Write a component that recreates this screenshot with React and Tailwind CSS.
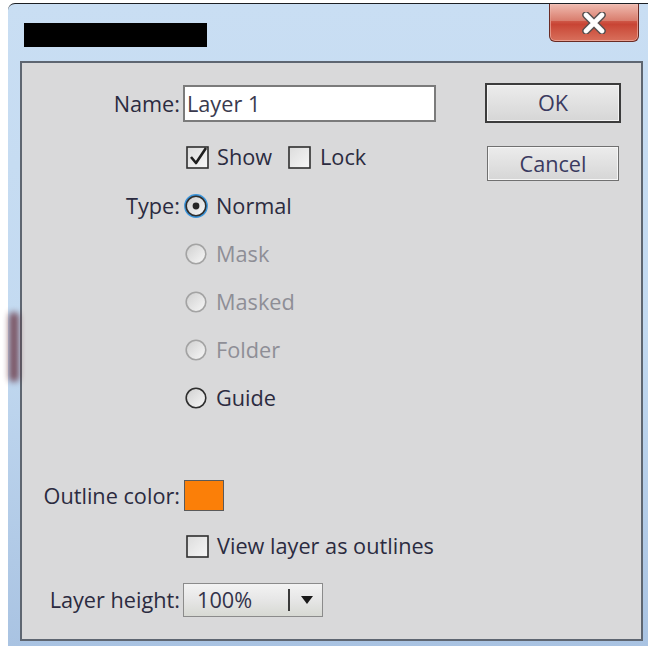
import React from 'react';

const font = { fontFamily: '"Open Sans", "Noto Sans", sans-serif' };

const CheckBox = ({ checked }) => (
  <svg width="24" height="24" viewBox="0 0 24 24" className="shrink-0">
    <defs>
      <linearGradient id="cbFill" x1="0" y1="0" x2="1" y2="1">
        <stop offset="0" stopColor="#dcdcdc" />
        <stop offset="1" stopColor="#f7f7f7" />
      </linearGradient>
    </defs>
    <rect x="1" y="2" width="21" height="21" fill="url(#cbFill)" stroke="#2f2f2f" strokeWidth="1.6" />
    {checked && (
      <path d="M5 12 L10 18 L20 3" fill="none" stroke="#1f1f1f" strokeWidth="2.6" strokeLinejoin="round" />
    )}
  </svg>
);

const Radio = ({ selected, disabled }) => (
  <svg width="24" height="24" viewBox="0 0 24 24" className="shrink-0">
    <defs>
      <linearGradient id="rdFill" x1="0" y1="0" x2="1" y2="1">
        <stop offset="0" stopColor="#cfcfcf" />
        <stop offset="1" stopColor="#f8f8f8" />
      </linearGradient>
    </defs>
    {selected && <circle cx="12" cy="12" r="11" fill="none" stroke="#3a95dc" strokeWidth="1.8" />}
    <circle
      cx="12"
      cy="12"
      r="9.8"
      fill="url(#rdFill)"
      stroke={disabled ? '#a3a3a3' : '#2e2e2e'}
      strokeWidth="1.6"
    />
    {selected && <circle cx="12" cy="12" r="3.4" fill="#262626" />}
  </svg>
);

const RadioRow = ({ label, selected, disabled, className = '' }) => (
  <div className={`flex h-[22px] items-center pl-[162px] ${className}`}>
    <Radio selected={selected} disabled={disabled} />
    <span className={`ml-[8px] ${disabled ? 'text-[#8e8e96]' : 'text-[#2b2b40]'}`}>{label}</span>
  </div>
);

export default function App() {
  return (
    <div className="h-[646px] w-[648px] overflow-hidden bg-white pl-[8px] pt-[3px]" style={font}>
      {/* window chrome */}
      <div className="relative h-[645px] w-[648px] rounded-tl-[7px] border-t border-[#1c1f24] bg-gradient-to-b from-[#c9def3] via-[#c3daf1] to-[#a9c3e2]">
        <div className="absolute left-[1px] top-[308px] h-[70px] w-[10px] rounded-full bg-[#5b1a26] opacity-70 blur-[3px]" />

        {/* title bar */}
        <div className="flex h-[57px] items-start">
          <div className="ml-[16px] mt-[19px] h-[24px] w-[183px] bg-black" />
          <button className="relative ml-auto mr-[17px] flex h-[38px] w-[90px] items-center justify-center overflow-hidden rounded-b-[6px] border border-t-0 border-[#6a2b24] bg-gradient-to-b from-[#e9a99d] from-0% via-[#c84434] via-55% to-[#d8705c] shadow-[inset_0_0_0_1px_rgba(255,220,210,0.45)]">
            <span className="absolute inset-x-0 top-0 h-[45%] bg-gradient-to-b from-[#f1c2b8] to-[#dc8b7c] opacity-70" />
            <svg width="24" height="22" viewBox="0 0 24 22" className="relative">
              <path d="M4 3 L20 19 M20 3 L4 19" stroke="#585050" strokeWidth="7.5" strokeLinecap="round" />
              <path d="M4 3 L20 19 M20 3 L4 19" stroke="#ffffff" strokeWidth="4.6" strokeLinecap="round" />
            </svg>
          </button>
        </div>

        {/* dialog body */}
        <div className="ml-[12px] flex h-[580px] w-[623px] border-2 border-[#5e6671] bg-[#d9d9da] text-[21.7px] leading-none text-[#2b2b40]">
          <div className="flex w-[463px] flex-col pt-[22px]">
            <div className="flex h-[37px] items-center">
              <span className="w-[158px] text-right">Name:</span>
              <div className="ml-[3px] flex h-[37px] w-[253px] items-center border-2 border-[#7b7b7b] bg-white pl-[2px] text-[#3a3a4e]">
                Layer 1
              </div>
            </div>

            <div className="mt-[24px] flex h-[22px] items-center pl-[164px]">
              <CheckBox checked />
              <span className="ml-[7px]">Show</span>
              <span className="ml-[16px]">
                <CheckBox />
              </span>
              <span className="ml-[8px]">Lock</span>
            </div>

            <div className="mt-[27px] flex h-[22px] items-center">
              <span className="w-[158px] text-right">Type:</span>
              <span className="ml-[4px]">
                <Radio selected />
              </span>
              <span className="ml-[8px]">Normal</span>
            </div>
            <RadioRow label="Mask" disabled className="mt-[26px]" />
            <RadioRow label="Masked" disabled className="mt-[26px]" />
            <RadioRow label="Folder" disabled className="mt-[26px]" />
            <RadioRow label="Guide" className="mt-[26px]" />

            <div className="mt-[71px] flex h-[31px] items-center">
              <span className="w-[158px] text-right">Outline color:</span>
              <div className="ml-[4px] h-[31px] w-[40px] border border-[#5a5a5a] bg-[#fb7f08]" />
            </div>

            <div className="mt-[24px] flex h-[22px] items-center pl-[164px]">
              <CheckBox />
              <span className="ml-[7px]">View layer as outlines</span>
            </div>

            <div className="mt-[26px] flex h-[34px] items-center">
              <span className="w-[158px] text-right">Layer height:</span>
              <div className="ml-[3px] flex h-[34px] w-[140px] items-center border border-[#8b8b8b] bg-gradient-to-b from-[#f3f3f3] via-[#e6e6e6] to-[#d7d9d3] pl-[13px] text-[#33334a]">
                <span className="w-[91px]">100%</span>
                <div className="h-[22px] w-[2px] bg-[#3a3a3a]" />
                <svg width="12" height="8" viewBox="0 0 12 8" className="ml-[11px]">
                  <path d="M0 0 H12 L6 8 Z" fill="#1a1a1a" />
                </svg>
              </div>
            </div>
          </div>

          <div className="flex w-[136px] flex-col items-center pt-[20px]">
            <button className="flex h-[40px] w-[136px] items-center justify-center border-2 border-[#3c3c3c] bg-gradient-to-b from-[#ececec] to-[#d6d6d6] text-[#3a3a60] shadow-[inset_0_0_0_1px_#f4f4f4]">
              OK
            </button>
            <button className="mt-[23px] flex h-[35px] w-[132px] items-center justify-center border border-[#707070] bg-gradient-to-b from-[#ececec] to-[#d6d6d6] text-[#3a3a60] shadow-[inset_0_0_0_1px_#f6f6f6]">
              Cancel
            </button>
          </div>
        </div>
      </div>
    </div>
  );
}
